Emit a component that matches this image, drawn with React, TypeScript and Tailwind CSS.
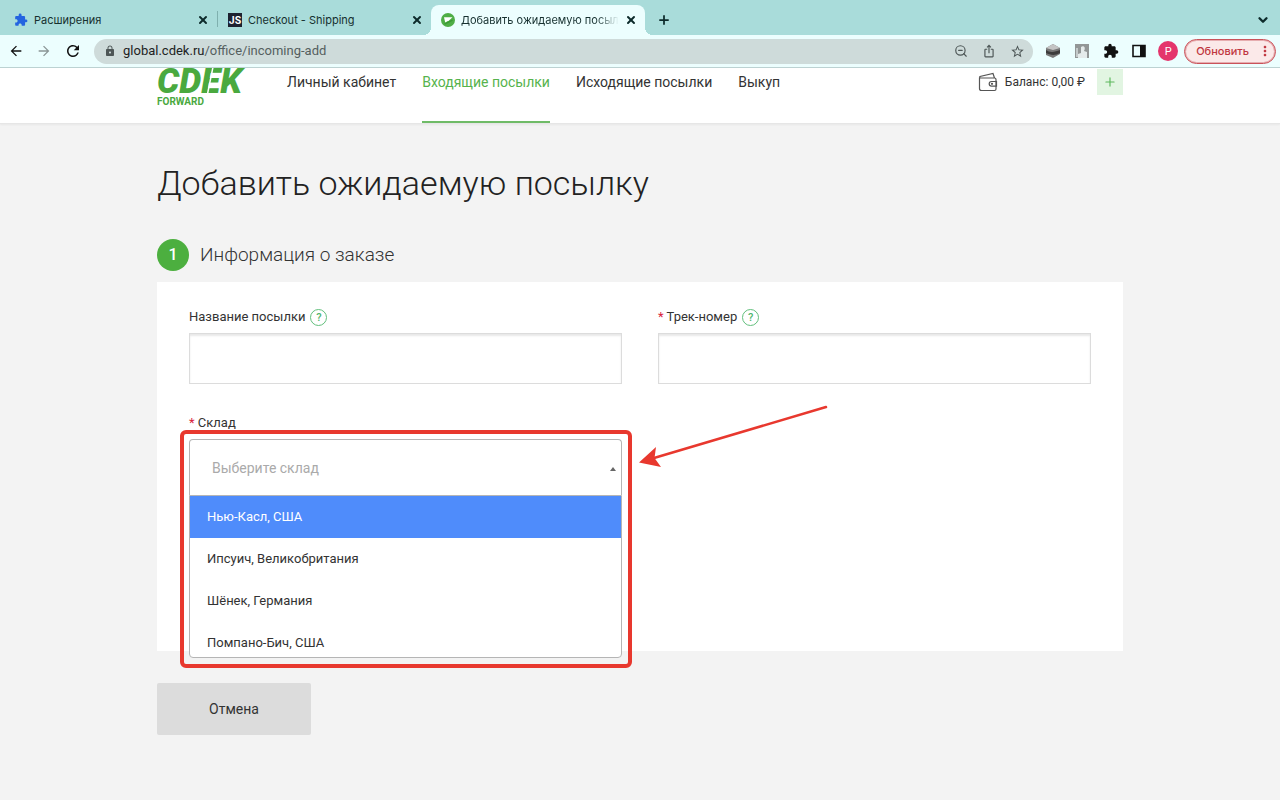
import type { ReactNode } from "react";
import {
	MdArrowBack,
	MdArrowForward,
	MdExtension,
	MdIosShare,
	MdLock,
	MdMoreVert,
	MdRefresh,
	MdStarBorder,
} from "react-icons/md";
import { ChevronDown, Plus, X, ZoomOut } from "lucide-react";

const warehouses = [
	"Нью-Касл, США",
	"Ипсуич, Великобритания",
	"Шёнек, Германия",
	"Помпано-Бич, США",
];

const navLinks = [
	{ label: "Личный кабинет", active: false },
	{ label: "Входящие посылки", active: true },
	{ label: "Исходящие посылки", active: false },
	{ label: "Выкуп", active: false },
];

function CdekFavicon() {
	return (
		<svg viewBox="0 0 14 14" className="size-3.5 shrink-0">
			<circle cx="7" cy="7" r="7" fill="#4fae46" />
			<path d="M3 4.300h8.500L8.300 7.200 4.200 9.400z" fill="#fff" />
			<path d="M3.500 11.200 11.500 7.200" stroke="#3c9a36" strokeWidth="1.500" />
		</svg>
	);
}

function JsFavicon() {
	return (
		<span className="flex size-3.5 shrink-0 items-center justify-center bg-[#1d2230] text-[10px] leading-none font-bold text-white">
			JS
		</span>
	);
}

function Tab({ icon, title, active }: { icon: ReactNode; title: string; active?: boolean }) {
	return (
		<div
			className={
				active
					? "relative flex h-[30px] w-[214px] items-center gap-1.5 rounded-t-lg bg-[#ecfefe] pr-2 pl-2.5"
					: "flex h-[30px] w-[213px] items-center gap-1.5 pr-2 pl-2.5"
			}
		>
			{active && (
				<>
					<span className="absolute bottom-0 -left-2 size-2 bg-radial-[at_0%_0%] from-transparent from-70% to-[#ecfefe] to-72%" />
					<span className="absolute -right-2 bottom-0 size-2 bg-radial-[at_100%_0%] from-transparent from-70% to-[#ecfefe] to-72%" />
				</>
			)}
			{icon}
			<span
				className={
					active
						? "min-w-0 flex-1 overflow-hidden whitespace-nowrap [mask-image:linear-gradient(to_right,black_85%,transparent)]"
						: "min-w-0 flex-1 overflow-hidden whitespace-nowrap"
				}
			>
				{title}
			</span>
			<button type="button" aria-label="Закрыть вкладку" className="text-[#0d2b2b]">
				<X className="size-3" strokeWidth={4} />
			</button>
		</div>
	);
}

function TabStrip() {
	return (
		<div className="flex h-[35px] items-end bg-[#a9dcda] pl-1 font-[Inter,sans-serif] text-[11px] text-[#16302f]">
			<Tab icon={<MdExtension className="size-3.5 shrink-0 text-[#2464e0]" />} title="Расширения" />
			<span className="mb-2 h-4 w-px bg-[#7fb0ae]" />
			<Tab icon={<JsFavicon />} title="Checkout - Shipping" />
			<Tab icon={<CdekFavicon />} title="Добавить ожидаемую посылку" active />
			<button type="button" aria-label="Новая вкладка" className="mb-2 ml-3 text-[#0d2b2b]">
				<Plus className="size-3.5" strokeWidth={3} />
			</button>
			<button type="button" aria-label="Поиск вкладок" className="mr-2.5 mb-2 ml-auto text-[#0d2b2b]">
				<ChevronDown className="size-3.5" strokeWidth={4} />
			</button>
		</div>
	);
}

function Toolbar() {
	return (
		<div className="flex h-[33px] items-center border-b border-[#bcd2d2] bg-[#ecfefe] pr-1 pl-2 text-[#111]">
			<button type="button" aria-label="Назад">
				<MdArrowBack className="size-4" />
			</button>
			<button type="button" aria-label="Вперёд" className="ml-3 text-[#8b9696]">
				<MdArrowForward className="size-4" />
			</button>
			<button type="button" aria-label="Обновить страницу" className="ml-3">
				<MdRefresh className="size-[18px]" />
			</button>
			<div className="ml-3 flex h-[25px] min-w-0 flex-1 items-center rounded-full bg-[#cedbda] pr-2 pl-2.5 text-[#4d5656]">
				<MdLock className="size-3 shrink-0" />
				<a href="#address" className="ml-[7px] text-[13px] text-[#555f5f]">
					<span className="text-[#1c2222]">global.cdek.ru</span>/office/incoming-add
				</a>
				<div className="ml-auto flex items-center gap-3.5">
					<ZoomOut className="size-[14px]" />
					<MdIosShare className="size-[14px]" />
					<MdStarBorder className="size-[15px]" />
				</div>
			</div>
			<div className="ml-3 flex items-center gap-[13px]">
				<svg viewBox="0 0 16 16" className="size-4">
					<path d="M1 5 8 1l7 4v6l-7 4-7-3z" fill="#777" />
					<path d="M1 5 8 1l7 4-7 2z" fill="#c4c4c4" />
					<path d="M1 7c4 3 9 2 14 0v3c-5 3-10 2-14 0z" fill="#3c3c3c" />
				</svg>
				<svg viewBox="0 0 16 16" className="size-4">
					<path d="M1 1h14v14H1z" fill="#929696" />
					<path d="M7 4c3-2 5 1 3 4l3 1v6H4v-4l3-1z" fill="#e4eaea" />
					<path d="M2 14V5h2v9z" fill="#c3c9c9" />
				</svg>
				<MdExtension className="size-4" />
				<svg viewBox="0 0 14 14" className="size-3.5">
					<path d="M1 1.500h12v11H1z" fill="none" stroke="#111" strokeWidth="1.600" />
					<path d="M8 1h5v12H8z" fill="#111" />
				</svg>
			</div>
			<button
				type="button"
				aria-label="Профиль"
				className="ml-3 size-5 rounded-full bg-[#e4356c] text-[11px] leading-none text-white"
			>
				P
			</button>
			<button
				type="button"
				className="ml-1.5 flex h-[25px] items-center rounded-full border border-[#c9525a] bg-[#fbe9e9] pr-0.5 pl-[11px] font-[Inter,sans-serif] text-[11px] font-medium text-[#c03640] ring-1 ring-[#c9525a]/40 ring-inset"
			>
				Обновить
				<MdMoreVert className="ml-2 size-4" />
			</button>
		</div>
	);
}

function Logo() {
	return (
		<svg viewBox="0 0 90 38" className="h-[38px] w-[90px]" fill="#4aa93f" role="img" aria-label="CDEK Forward">
			<text y="25" fontSize="35" fontWeight="900" fontStyle="italic">
				CDEK
			</text>
			<path d="M50.500 26 56 -1" stroke="#fff" strokeWidth="1.500" />
			<text y="37" fontSize="10" fontWeight="700">
				FORWARD
			</text>
		</svg>
	);
}

function WalletIcon() {
	return (
		<svg viewBox="0 0 20 20" className="size-5" fill="none" stroke="#555" strokeWidth="1.200">
			<path d="M1.500 5.500v11a2 2 0 0 0 2 2h13a1.500 1.500 0 0 0 1.500-1.500V7.500A1.500 1.500 0 0 0 16.500 6H2.200A1 1 0 0 1 2 4.500L15 1.500 16.500 6" />
			<path d="M18.500 9.500H13.500a2.300 2.300 0 0 0 0 4.600h5z" />
			<circle cx="14" cy="11.800" r=".5" />
		</svg>
	);
}

function SiteHeader() {
	return (
		<header className="border-b border-[#e6e6e6] bg-white shadow-xs">
			<div className="mx-auto flex h-[55px] max-w-[966px] items-start">
				<a href="#home" className="w-[130px]">
					<Logo />
				</a>
				<nav className="flex gap-[26px] self-stretch text-sm text-[#333]">
					{navLinks.map((link) => (
						<a
							key={link.label}
							href="#nav"
							className={
								link.active
									? "border-b-2 border-[#6fbb67] pt-1 text-[#56b34d]"
									: "pt-1"
							}
						>
							{link.label}
						</a>
					))}
				</nav>
				<div className="ml-auto flex h-7 items-center text-[#333]">
					<WalletIcon />
					<span className="ml-[7px] text-xs">Баланс: 0,00 ₽</span>
					<button
						type="button"
						aria-label="Пополнить баланс"
						className="ml-3 flex size-[26px] items-center justify-center bg-[#e2f5e2] text-[#5cb85c]"
					>
						<Plus className="size-3.5" />
					</button>
				</div>
			</div>
		</header>
	);
}

function Hint() {
	return (
		<button
			type="button"
			aria-label="Подсказка"
			className="ml-[5px] size-[17px] rounded-full border border-[#62bf7c] text-[11px] leading-none font-medium text-[#4fb56c]"
		>
			?
		</button>
	);
}

function TextField({ id, label, required }: { id: string; label: string; required?: boolean }) {
	return (
		<div>
			<div className="flex h-5 items-center text-[13px] text-[#333]">
				<label htmlFor={id}>
					{required && <span className="text-[#d9233c]">* </span>}
					{label}
				</label>
				<Hint />
			</div>
			<input
				id={id}
				type="text"
				className="mt-1.5 block h-[51px] w-full border border-[#dcdcdc] bg-white px-4 text-sm shadow-[inset_0_2px_2px_#e8e8e8] outline-none"
			/>
		</div>
	);
}

function WarehouseSelect() {
	return (
		<div>
			<label htmlFor="warehouse" className="block h-5 text-[13px] leading-5 text-[#333]">
				<span className="text-[#d9233c]">* </span>
				Склад
			</label>
			<div className="relative mt-1.5">
				<select
					id="warehouse"
					defaultValue=""
					className="block h-14 w-full appearance-none rounded-t-sm border border-b-0 border-[#b5b5b5] bg-white px-[22px] text-sm text-[#aaa] outline-none"
				>
					<option value="">Выберите склад</option>
					{warehouses.map((name) => (
						<option key={name}>{name}</option>
					))}
				</select>
				<svg viewBox="0 0 6 4" className="pointer-events-none absolute top-7 right-1.5 h-1 w-1.5">
					<path d="M0 4 3 0l3 4z" fill="#666" />
				</svg>
				<ul
					role="listbox"
					className="absolute inset-x-0 top-14 h-[163px] overflow-hidden rounded-b-sm border border-[#b5b5b5] bg-white text-[13px] text-[#333]"
				>
					{warehouses.map((name, i) => (
						<li
							key={name}
							role="option"
							aria-selected={i === 0}
							className={
								i === 0
									? "bg-[#4f8cfb] px-[17px] leading-[42px] text-white"
									: "px-[17px] leading-[42px]"
							}
						>
							{name}
						</li>
					))}
				</ul>
				<div className="pointer-events-none absolute -top-[9px] -right-2.5 -left-[9px] h-[238px] rounded-md border-4 border-[#e8382e]" />
				<svg
					viewBox="0 0 190 64"
					className="pointer-events-none absolute -top-9 left-full ml-4 h-16 w-[190px]"
				>
					<path d="M188 4 16 55" stroke="#e8382e" strokeWidth="2.500" strokeLinecap="round" />
					<path d="M1 59.500 18 44l-1.500 11L23 64z" fill="#e8382e" />
				</svg>
			</div>
		</div>
	);
}

export default function App() {
	return (
		<div className="min-h-screen bg-[#f3f3f3] font-[Roboto,sans-serif]">
			<TabStrip />
			<Toolbar />
			<SiteHeader />
			<main className="mx-auto max-w-[966px] pt-9 pb-16">
				<h1 className="text-[34px] leading-[46px] font-light text-[#222]">Добавить ожидаемую посылку</h1>
				<div className="mt-[33px] flex items-center gap-[11px]">
					<span className="flex size-8 items-center justify-center rounded-full bg-[#4caf3f] font-medium text-white">
						1
					</span>
					<h2 className="text-[19px] font-light text-[#333]">Информация о заказе</h2>
				</div>
				<form>
					<div className="mt-[11px] grid min-h-[369px] grid-cols-2 content-start gap-x-9 gap-y-[29px] bg-white px-8 pt-[25px]">
						<TextField id="parcel-name" label="Название посылки" />
						<TextField id="track-number" label="Трек-номер" required />
						<WarehouseSelect />
					</div>
					<button
						type="button"
						className="mt-8 h-[52px] w-[154px] rounded-xs bg-[#dcdcdc] text-sm text-[#333]"
					>
						Отмена
					</button>
				</form>
			</main>
		</div>
	);
}
